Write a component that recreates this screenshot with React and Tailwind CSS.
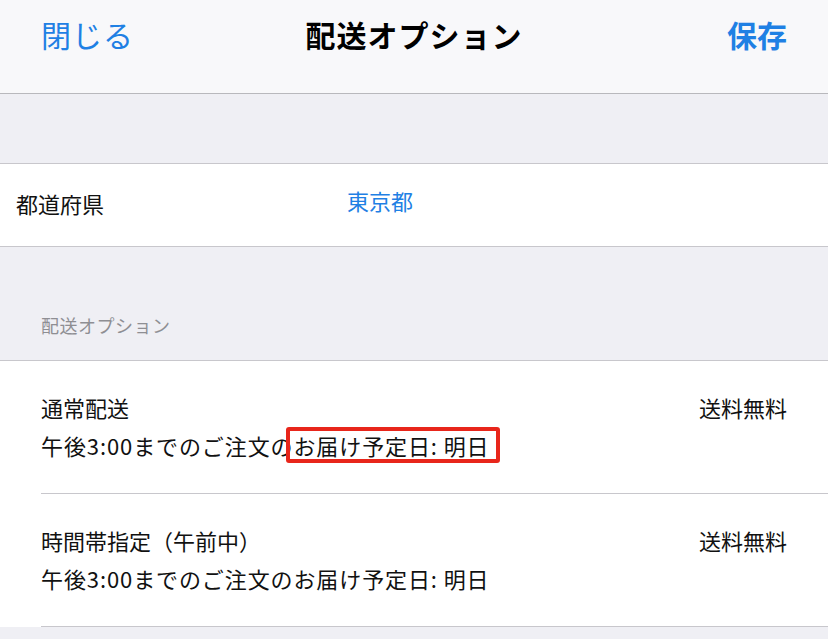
const FONT = { fontFamily: '"Noto Sans CJK JP", "Noto Sans", sans-serif' };

const options = [
  { id: 1, name: "通常配送", price: "送料無料", highlight: true },
  { id: 2, name: "時間帯指定（午前中）", price: "送料無料", highlight: false },
];

const OptionRow = ({ option }) => (
  <div className="pl-[41px]">
    <div className="flex justify-between border-b border-[#c8c7cc] pr-[41px] pt-[27px] pb-[29px]">
      <div className="flex flex-col text-[22px] leading-[38px] text-[#111]">
        <span>{option.name}</span>
        <span className="tracking-[0.9px]">
          午後3:00までのご注文の
          <span className="relative">
            お届け予定日: 明日
            {option.highlight && (
              <span className="absolute -left-[7px] -right-[10px] -top-[2px] -bottom-[2px] rounded-[3px] border-[4px] border-[#e8261b]" />
            )}
          </span>
        </span>
      </div>
      <span className="text-[22px] leading-[38px] text-[#111]">{option.price}</span>
    </div>
  </div>
);

const App = () => {
  return (
    <div className="w-[828px] h-[639px] overflow-hidden bg-[#efeff4]" style={FONT}>
      {/* Header */}
      <div className="relative h-[94px] bg-[#f8f8fa] border-b border-[#b8b8bc]">
        <div className="flex items-center justify-between h-[68px] px-[41px]">
          <button className="text-[30px] text-[#1f80e4] tracking-[1px]">閉じる</button>
          <h1 className="absolute left-0 right-0 top-0 h-[68px] flex items-center justify-center text-[30px] font-bold text-black tracking-[1px] pointer-events-none">
            配送オプション
          </h1>
          <button className="text-[30px] font-bold text-[#1f80e4]">保存</button>
        </div>
      </div>

      <div className="h-[69px]" />

      {/* Prefecture */}
      <div className="flex items-center h-[84px] bg-white border-y border-[#c8c7cc] pl-[16px] pb-[4px]">
        <span className="w-[331px] text-[22px] text-[#111]">都道府県</span>
        <span className="text-[22px] text-[#1f80e4] -mt-[6px]">東京都</span>
      </div>

      <div className="h-[113px] flex items-end pl-[41px] pb-[21px]">
        <span className="text-[18px] tracking-[0.5px] text-[#8e8e93]">配送オプション</span>
      </div>

      {/* Options */}
      <div className="bg-white border-t border-[#c8c7cc]">
        {options.map((option) => (
          <OptionRow key={option.id} option={option} />
        ))}
      </div>
    </div>
  );
};

export default App;
